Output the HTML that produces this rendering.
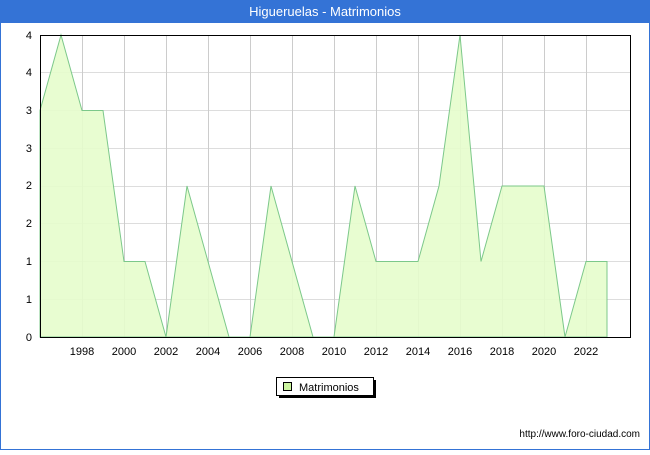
<!DOCTYPE html><html><head><style>body{margin:0}</style></head><body>
<svg width="650" height="450" xmlns="http://www.w3.org/2000/svg" font-family="Liberation Sans, DejaVu Sans, sans-serif">
<rect x="0" y="0" width="650" height="450" fill="#fff"/>
<rect x="0.5" y="0.5" width="649" height="449" fill="none" stroke="#3473d6"/>
<rect x="0" y="0" width="650" height="23" fill="#3473d6"/>
<text x="325" y="16" text-anchor="middle" fill="#fff" font-size="13">Higueruelas - Matrimonios</text>
<g stroke="#ddd" stroke-width="1">
<line x1="40" y1="72.5" x2="630" y2="72.5"/><line x1="40" y1="110.5" x2="630" y2="110.5"/><line x1="40" y1="148.5" x2="630" y2="148.5"/><line x1="40" y1="186.5" x2="630" y2="186.5"/><line x1="40" y1="223.5" x2="630" y2="223.5"/><line x1="40" y1="261.5" x2="630" y2="261.5"/><line x1="40" y1="299.5" x2="630" y2="299.5"/>
</g>
<g stroke="#ccc">
<line x1="82.5" y1="35" x2="82.5" y2="337"/><line x1="124.5" y1="35" x2="124.5" y2="337"/><line x1="166.5" y1="35" x2="166.5" y2="337"/><line x1="208.5" y1="35" x2="208.5" y2="337"/><line x1="250.5" y1="35" x2="250.5" y2="337"/><line x1="292.5" y1="35" x2="292.5" y2="337"/><line x1="334.5" y1="35" x2="334.5" y2="337"/><line x1="376.5" y1="35" x2="376.5" y2="337"/><line x1="418.5" y1="35" x2="418.5" y2="337"/><line x1="460.5" y1="35" x2="460.5" y2="337"/><line x1="502.5" y1="35" x2="502.5" y2="337"/><line x1="544.5" y1="35" x2="544.5" y2="337"/><line x1="586.5" y1="35" x2="586.5" y2="337"/>
</g>
<polygon fill="#e5fdcc" fill-opacity="0.9" stroke="#7cc88a" stroke-width="1" points="40,337 40,110.5 61,35 82,110.5 103,110.5 124,261.5 145,261.5 166,337 187,186 208,261.5 229,337 250,337 271,186 292,261.5 313,337 334,337 355,186 376,261.5 397,261.5 418,261.5 439,186 460,35 481,261.5 502,186 523,186 544,186 565,337 586,261.5 607,261.5 607,337"/>
<rect x="40.5" y="35.5" width="590" height="302" fill="none" stroke="#000"/>
<g font-size="11" fill="#000" text-anchor="end">
<text x="32" y="341">0</text><text x="32" y="303">1</text><text x="32" y="265">1</text><text x="32" y="227">2</text><text x="32" y="189">2</text><text x="32" y="152">3</text><text x="32" y="114">3</text><text x="32" y="76">4</text><text x="32" y="39">4</text>
</g>
<g font-size="11" fill="#000" text-anchor="middle">
<text x="82" y="355">1998</text><text x="124" y="355">2000</text><text x="166" y="355">2002</text><text x="208" y="355">2004</text><text x="250" y="355">2006</text><text x="292" y="355">2008</text><text x="334" y="355">2010</text><text x="376" y="355">2012</text><text x="418" y="355">2014</text><text x="460" y="355">2016</text><text x="502" y="355">2018</text><text x="544" y="355">2020</text><text x="586" y="355">2022</text>
</g>
<rect x="279" y="380" width="97" height="18" fill="#000"/>
<rect x="276.5" y="377.5" width="97" height="18" fill="#fff" stroke="#000"/>
<rect x="283.5" y="382.5" width="8" height="8" fill="#ccf5a0" stroke="#000"/>
<text x="299" y="391" font-size="11">Matrimonios</text>
<text x="640" y="437" font-size="10" text-anchor="end">http://www.foro-ciudad.com</text>
</svg>
</body></html>
